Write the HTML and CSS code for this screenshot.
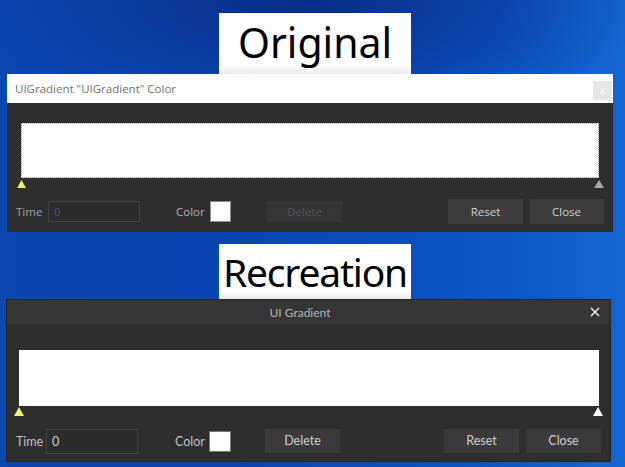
FILE: index.html
```html
<!DOCTYPE html>
<html lang="en">
<head>
  <meta charset="UTF-8" />
  <title>UIGradient Color</title>
  <link rel="stylesheet" href="styles.css">
</head>
<body>
  <div class="desk">
    <div class="label label-orig">Original</div>

    <div class="win-orig">
      <div class="orig-title">
        <span class="orig-caption">UIGradient "UIGradient" Color</span>
        <span class="orig-x">x</span>
      </div>
      <div class="orig-body">
        <div class="orig-bar"></div>
        <div class="orig-markers">
          <svg width="9" height="8" viewBox="0 0 9 8"><polygon points="4.5,0 9,8 0,8" fill="#f2ef6e"/></svg>
          <svg width="10" height="8" viewBox="0 0 10 8"><polygon points="5,0 10,8 0,8" fill="#a9a9a9"/></svg>
        </div>
        <div class="orig-row">
          <span class="orig-time">Time</span>
          <span class="orig-input">0</span>
          <span class="orig-color">Color</span>
          <span class="orig-swatch"></span>
          <span class="orig-delete">Delete</span>
          <span class="grow"></span>
          <span class="orig-btn">Reset</span>
          <span class="orig-btn">Close</span>
        </div>
      </div>
    </div>

    <div class="label label-rec">Recreation</div>

    <div class="win-rec">
      <div class="rec-title">
        <span class="rec-caption">UI Gradient</span>
        <span class="rec-x">
          <svg width="10" height="10" viewBox="0 0 10 10"><path d="M1 1L9 9M9 1L1 9" stroke="#e6e6e6" stroke-width="1.6"/></svg>
        </span>
      </div>
      <div class="rec-body">
        <div class="rec-bar"></div>
        <div class="rec-markers">
          <svg width="10" height="9" viewBox="0 0 10 9"><polygon points="5,0 10,9 0,9" fill="#f5f07a"/></svg>
          <svg width="10" height="9" viewBox="0 0 10 9"><polygon points="5,0 10,9 0,9" fill="#ffffff"/></svg>
        </div>
        <div class="rec-row">
          <span class="rec-time">Time</span>
          <span class="rec-input">0</span>
          <span class="rec-color">Color</span>
          <span class="rec-swatch"></span>
          <span class="rec-btn rec-delete">Delete</span>
          <span class="grow"></span>
          <span class="rec-btn">Reset</span>
          <span class="rec-btn rec-close">Close</span>
        </div>
      </div>
    </div>
  </div>
</body>
</html>
```

FILE: styles.css
```css
html, body {
  margin: 0;
}
body {
  width: 625px;
  height: 467px;
  overflow: hidden;
  font-family: "Open Sans", sans-serif;
  background:
    radial-gradient(ellipse 340px 120px at 50% 0%, rgba(8, 36, 120, 0.75), rgba(8, 36, 120, 0)),
    linear-gradient(90deg, #0a47b0 0%, #0a46b2 40%, #0b52c2 75%, #1466d2 100%);
}
.desk {
  display: flex;
  flex-direction: column;
  align-items: flex-start;
  padding-top: 13px;
}
.grow {
  flex: 1;
}

/* labels */
.label {
  margin-left: 219px;
  width: 192px;
  background: linear-gradient(#fff 85%, #ececec);
  color: #000;
  font-family: "Noto Sans", sans-serif;
  font-size: 41px;
  text-align: center;
  white-space: nowrap;
}
.label-orig {
  height: 61px;
  line-height: 58px;
}
.label-rec {
  margin-top: 12px;
  height: 55px;
  line-height: 56px;
  font-size: 39px;
  letter-spacing: -1.2px;
}

/* original window */
.win-orig {
  margin-left: 7px;
  width: 606px;
}
.orig-title {
  height: 29px;
  background: #fff;
  display: flex;
  justify-content: space-between;
  padding: 0 1px 0 8px;
}
.orig-caption {
  line-height: 29px;
  font-size: 11.5px;
  color: #6f6f6f;
}
.orig-x {
  margin-top: 7px;
  width: 19px;
  height: 19px;
  background: #e6e6e6;
  color: #fafafa;
  font-size: 11px;
  line-height: 18px;
  text-align: center;
}
.orig-body {
  background: #2e2e2e;
  height: 129px;
  padding-top: 20px;
  box-sizing: border-box;
}
.orig-bar {
  margin: 0 14px;
  height: 55px;
  background: #fff;
  border: 1px dotted #9a9a9a;
  box-sizing: border-box;
}
.orig-markers {
  margin: 2px 9px 0 10px;
  height: 8px;
  display: flex;
  justify-content: space-between;
}
.orig-markers svg {
  display: block;
}
.orig-row {
  margin-top: 11px;
  height: 25px;
  padding: 0 9px;
  display: flex;
  align-items: center;
  font-size: 11.5px;
}
.orig-time {
  width: 32px;
  color: #9fa3a8;
}
.orig-input {
  width: 92px;
  height: 21px;
  box-sizing: border-box;
  border: 1px solid #444;
  background: #2b2b2b;
  color: #555;
  padding-left: 5px;
  line-height: 19px;
}
.orig-color {
  margin-left: 36px;
  width: 34px;
  color: #b3b3b3;
}
.orig-swatch {
  width: 21px;
  height: 21px;
  box-sizing: border-box;
  background: #fff;
  border: 1px solid #8c8c8c;
}
.orig-delete {
  margin-left: 36px;
  width: 75px;
  height: 21px;
  line-height: 21px;
  background: #353535;
  color: #555;
  text-align: center;
}
.orig-btn {
  margin-left: 6px;
  width: 75px;
  height: 25px;
  line-height: 25px;
  background: #3b3b3b;
  color: #d2d2d2;
  text-align: center;
}

/* recreation window */
.win-rec {
  margin-left: 6px;
  width: 605px;
  border: 1px solid #242424;
  box-sizing: border-box;
  font-family: "Lato", sans-serif;
}
.rec-title {
  height: 24px;
  background: #363636;
  display: flex;
  align-items: center;
  padding: 0 5px 0 8px;
}
.rec-caption {
  flex: 1;
  text-align: center;
  font-size: 12px;
  color: #b8b8b8;
}
.rec-x {
  width: 20px;
  display: flex;
  justify-content: center;
}
.rec-x svg {
  display: block;
}
.rec-body {
  background: #2e2e2e;
  height: 137px;
  padding-top: 26px;
  box-sizing: border-box;
}
.rec-bar {
  margin: 0 11px 0 12px;
  height: 56px;
  background: #fff;
}
.rec-markers {
  margin: 1px 7px 0 7px;
  height: 9px;
  display: flex;
  justify-content: space-between;
}
.rec-markers svg {
  display: block;
}
.rec-row {
  margin-top: 12px;
  height: 26px;
  padding: 0 9px;
  display: flex;
  align-items: center;
  font-size: 12.5px;
}
.rec-time {
  width: 30px;
  color: #c2c2c2;
}
.rec-input {
  width: 92px;
  height: 25px;
  box-sizing: border-box;
  border: 1px solid #434343;
  background: #2c2c2c;
  color: #cfcfcf;
  padding-left: 5px;
  line-height: 23px;
}
.rec-color {
  margin-left: 37px;
  width: 34px;
  color: #c2c2c2;
}
.rec-swatch {
  width: 22px;
  height: 21px;
  box-sizing: border-box;
  background: #fff;
  border: 1px solid #777;
}
.rec-btn {
  margin-left: 7px;
  width: 75px;
  height: 24px;
  line-height: 24px;
  background: #3a3a3a;
  color: #cfcfcf;
  text-align: center;
}
.rec-delete {
  margin-left: 34px;
}
```
